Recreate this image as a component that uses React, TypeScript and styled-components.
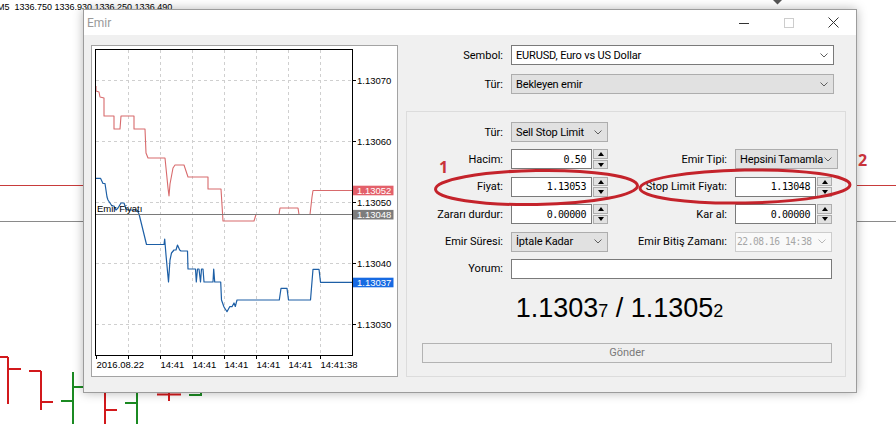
import React from 'react'
import styled, { createGlobalStyle } from 'styled-components'

const UI_FONT = 'Roboto, "Liberation Sans", Arial, sans-serif'
const CHART_FONT = '"Liberation Sans", Arial, sans-serif'
const MONO_FONT = '"DejaVu Sans Mono", "Liberation Mono", monospace'

const GRID_X = [128, 160, 192, 224, 256, 288, 320]
const PRICE_LEVELS = [
  { y: 80, label: '1.13070' },
  { y: 141, label: '1.13060' },
  { y: 202, label: '1.13050' },
  { y: 263, label: '1.13040' },
  { y: 324, label: '1.13030' },
]
const TIME_LABELS = [
  { x: 96, label: '2016.08.22' },
  { x: 160, label: '14:41' },
  { x: 192, label: '14:41' },
  { x: 224, label: '14:41' },
  { x: 256, label: '14:41' },
  { x: 288, label: '14:41' },
  { x: 320, label: '14:41:38' },
]
const PRICE_TAGS = [
  { y: 190.5, color: '#e3606a', label: '1.13052' },
  { y: 214.7, color: '#7c7c7c', label: '1.13048' },
  { y: 282.5, color: '#176ae2', label: '1.13037' },
]

const ASK_PATH =
  'M96 86 V91 L99 92 L100 97 L104 98 V116 H114 V129 H120 L121 116 H134 V129 H145 L146 153 L148 158 H165 L168 188 L169 196 L170 184 L173 168 L175 165 H184 L188 177 H208 V189 H221 L223 221 H254 L256 214.5 H279 L280 208 H298 L299 214.5 H310 L312 197 L313 190.5 H352'
const BID_PATH =
  'M96 178.3 H100.5 L103 183.5 H105 L107 197 L108 200 L110 203 L112 206 H114 L116 210 L118 208 L121 203 L124 203 L126 209 L128 210 H137 L139 214 L141 222 L146.5 244.5 H164 L164.7 239 L166 255 L168.5 282 L170 260 L171.5 253 L174 250 H176 L177.5 245 L179.7 250 L181 251 H187.5 L188 269 H195.5 L196.3 282 L197.5 269 H199 L200.5 282 L201.5 269 H203 L204 282 H213 L213.7 269 L214.7 282 H220.7 L221.5 300 L224 307 L227 311.7 L229.7 306.7 H232 L234 303 L235.3 306.5 L237 300 H279.3 L281 288.3 H287 L288.5 300 H310.5 L313 269.3 H319 L320.5 282.3 H352'

// background bars of the main chart that peek out under the dialog
const BARS = [
  { x: 8, top: 357, bottom: 404, open: 357, openFrom: 0, close: 369, closeTo: 21, color: '#d2191c' },
  { x: 41, top: 371, bottom: 410, open: 371, openFrom: 29, close: 402, closeTo: 53, color: '#d2191c' },
  { x: 73, top: 372, bottom: 424, open: 401, openFrom: 61, close: 387, closeTo: 84, color: '#1b8a22' },
  { x: 105, top: 380, bottom: 424, open: 392, openFrom: 95, close: 410, closeTo: 117, color: '#d2191c' },
  { x: 137, top: 380, bottom: 424, open: 403, openFrom: 125, close: 390, closeTo: 147, color: '#1b8a22' },
  { x: 169, top: 385, bottom: 401, open: 394.5, openFrom: 157, close: 394.5, closeTo: 181, color: '#d2191c' },
  { x: 201, top: 385, bottom: 396, open: 395, openFrom: 189, close: 390, closeTo: 203, color: '#1b8a22' },
]

const GlobalStyle = createGlobalStyle`
  html, body {
    margin: 0;
    padding: 0;
    background: #fff;
  }
  body {
    width: 896px;
    height: 424px;
    overflow: hidden;
  }
  * {
    box-sizing: border-box;
  }
`

function Chevron({ muted }: { muted?: boolean }) {
  return (
    <ChevronSvg width="8" height="5" viewBox="0 0 8 5">
      <polyline points="0.5,0.5 4,4 7.5,0.5" fill="none" stroke={muted ? '#b8b8b8' : '#5e5e5e'} strokeWidth="1" />
    </ChevronSvg>
  )
}

function ComboBox(props: { value: string, tone?: 'white' | 'gray' | 'disabled', width?: number, mono?: boolean }) {
  const { value, tone = 'gray', width, mono } = props
  return (
    <Combo $tone={tone} $width={width} $mono={mono}>
      <ComboText $mono={mono}>{value}</ComboText>
      <Chevron muted={tone === 'disabled'} />
    </Combo>
  )
}

function SpinInput({ value }: { value: string }) {
  return (
    <SpinField>
      <NumInput>{value}</NumInput>
      <Spinner>
        <SpinButton><SpinArrow $up /></SpinButton>
        <SpinButton><SpinArrow /></SpinButton>
      </Spinner>
    </SpinField>
  )
}

function OrderChart() {
  return (
    <ChartSvg width="305" height="330" viewBox="92 46 305 330">
      <g stroke="#cfcfcf" strokeDasharray="3 3" shapeRendering="crispEdges">
        {GRID_X.map(x => <line key={x} x1={x + 0.5} y1={50} x2={x + 0.5} y2={355} />)}
        {PRICE_LEVELS.map(l => <line key={l.y} x1={96} y1={l.y + 0.5} x2={352} y2={l.y + 0.5} />)}
      </g>
      <path d={ASK_PATH} fill="none" stroke="#d86a6c" strokeWidth="1.1" strokeLinejoin="round" />
      <path d={BID_PATH} fill="none" stroke="#1d5fa6" strokeWidth="1.2" strokeLinejoin="round" />
      <line x1={95} y1={214.5} x2={352} y2={214.5} stroke="#7a7a7a" shapeRendering="crispEdges" />
      <text x={97} y={212} fontFamily={CHART_FONT} fontSize="9.5" fill="#000">Emir Fiyatı</text>
      <rect x={95.5} y={49.5} width={257} height={305.5} fill="none" stroke="#000" shapeRendering="crispEdges" />
      <g stroke="#000" shapeRendering="crispEdges">
        {PRICE_LEVELS.map(l => <line key={l.y} x1={352} y1={l.y + 0.5} x2={356} y2={l.y + 0.5} />)}
        {[96, ...GRID_X].map(x => <line key={x} x1={x + 0.5} y1={355} x2={x + 0.5} y2={359} />)}
      </g>
      <g fontFamily={CHART_FONT} fontSize="9.5" fill="#000">
        {PRICE_LEVELS.map(l => <text key={l.y} x={357} y={l.y + 3.8}>{l.label}</text>)}
        {TIME_LABELS.map(t => <text key={t.x} x={t.x + 0.5} y={368}>{t.label}</text>)}
      </g>
      {PRICE_TAGS.map(t => (
        <g key={t.label}>
          <rect x={353} y={t.y - 4.8} width={40.5} height={9.6} fill={t.color} />
          <text x={357} y={t.y + 3.6} fontFamily={CHART_FONT} fontSize="9.5" fill="#fff">{t.label}</text>
        </g>
      ))}
    </ChartSvg>
  )
}

export default function App() {
  return (
    <Page>
      <GlobalStyle />
      <Backdrop width="896" height="424" viewBox="0 0 896 424">
        <line x1={0} y1={185.5} x2={896} y2={185.5} stroke="#c83b3b" />
        <line x1={0} y1={221.5} x2={896} y2={221.5} stroke="#8a8a8a" />
        <polygon points="773,0 782,0 777.5,4.5" fill="#555" />
        {BARS.map(b => (
          <g key={b.x} stroke={b.color} strokeWidth="2">
            <line x1={b.x} y1={b.top} x2={b.x} y2={b.bottom} />
            <line x1={b.openFrom} y1={b.open} x2={b.x} y2={b.open} />
            <line x1={b.x} y1={b.close} x2={b.closeTo} y2={b.close} />
          </g>
        ))}
      </Backdrop>
      <InfoLine>M5  1336.750 1336.930 1336.250 1336.490</InfoLine>

      <Dialog>
        <TitleBar>
          <Title>Emir</Title>
          <CaptionButton>
            <svg width="10" height="10" viewBox="0 0 10 10">
              <line x1="0" y1="5.5" x2="10" y2="5.5" stroke="#333" />
            </svg>
          </CaptionButton>
          <CaptionButton>
            <svg width="10" height="10" viewBox="0 0 10 10">
              <rect x="0.5" y="0.5" width="9" height="9" fill="none" stroke="#cdcdcd" />
            </svg>
          </CaptionButton>
          <CaptionButton>
            <svg width="11" height="11" viewBox="0 0 11 11">
              <path d="M0.5 0.5 L10.5 10.5 M10.5 0.5 L0.5 10.5" stroke="#333" strokeWidth="1" />
            </svg>
          </CaptionButton>
        </TitleBar>

        <Body>
          <ChartFrame>
            <OrderChart />
          </ChartFrame>

          <Side>
            <TopRow>
              <Label>Sembol:</Label>
              <ComboBox value="EURUSD, Euro vs US Dollar" tone="white" />
            </TopRow>
            <TopRow>
              <Label>Tür:</Label>
              <ComboBox value="Bekleyen emir" />
            </TopRow>

            <GroupBox>
              <FormGrid>
                <Label>Tür:</Label>
                <ComboBox value="Sell Stop Limit" />
                <span />
                <span />

                <Label>Hacim:</Label>
                <SpinInput value="0.50" />
                <Label>Emir Tipi:</Label>
                <ComboBox value="Hepsini Tamamla" width={103} />

                <Label>Fiyat:</Label>
                <SpinInput value="1.13053" />
                <Label>Stop Limit Fiyatı:</Label>
                <SpinInput value="1.13048" />

                <Label>Zararı durdur:</Label>
                <SpinInput value="0.00000" />
                <Label>Kar al:</Label>
                <SpinInput value="0.00000" />

                <Label>Emir Süresi:</Label>
                <ComboBox value="İptale Kadar" />
                <Label>Emir Bitiş Zamanı:</Label>
                <ComboBox value="22.08.16 14:38" tone="disabled" mono />

                <Label>Yorum:</Label>
                <CommentInput />
              </FormGrid>

              <Quote>
                1.1303<QuoteTail>7</QuoteTail> / 1.1305<QuoteTail>2</QuoteTail>
              </Quote>

              <SendButton disabled>Gönder</SendButton>
            </GroupBox>
          </Side>
        </Body>
      </Dialog>

      <Marks width="896" height="424" viewBox="0 0 896 424">
        <ellipse cx={536.5} cy={187.5} rx={101} ry={17} transform="rotate(-1 536.5 187.5)" fill="none" stroke="#c4232b" strokeWidth="3" />
        <ellipse cx={745} cy={186.5} rx={105} ry={16.5} transform="rotate(-1 745 186.5)" fill="none" stroke="#c4232b" strokeWidth="3" />
      </Marks>
      <MarkNumber $left={439} $top={159}>1</MarkNumber>
      <MarkNumber $left={858} $top={151.5}>2</MarkNumber>
    </Page>
  )
}

const Page = styled.div`
  position: relative;
  width: 896px;
  height: 424px;
  overflow: hidden;
  background: #fff;
`
const Backdrop = styled.svg`
  position: absolute;
  left: 0;
  top: 0;
`
const InfoLine = styled.div`
  position: relative;
  margin-left: -3px;
  padding-top: 2px;
  font-family: ${CHART_FONT};
  font-size: 9px;
  line-height: 10px;
  white-space: pre;
  color: #000;
`
const Dialog = styled.div`
  position: absolute;
  left: 83px;
  top: 9px;
  width: 774px;
  height: 384px;
  display: flex;
  flex-direction: column;
  border: 1px solid #9c9c9c;
  background: #f0f0f0;
  box-shadow: 0 0 10px rgba(0, 0, 0, 0.28);
  font-family: ${UI_FONT};
`
const TitleBar = styled.div`
  height: 25px;
  flex: none;
  display: flex;
  align-items: center;
  background: #fff;
`
const Title = styled.div`
  flex: 1;
  padding-left: 3px;
  font-size: 12px;
  color: #9a9a9a;
`
const CaptionButton = styled.div`
  width: 45px;
  height: 25px;
  display: flex;
  align-items: center;
  justify-content: center;
`
const Body = styled.div`
  flex: 1;
  min-height: 0;
  display: flex;
  gap: 8px;
  padding: 10px 10px 15px 7px;
`
const ChartFrame = styled.div`
  width: 307px;
  flex: none;
  border: 1px solid #a3a3a3;
  background: #fff;
`
const ChartSvg = styled.svg`
  display: block;
`
const Side = styled.div`
  flex: 1;
  display: flex;
  flex-direction: column;
`
const TopRow = styled.div`
  display: grid;
  grid-template-columns: 97px 1fr;
  column-gap: 8px;
  height: 20px;
  padding-right: 12px;
  & + & {
    margin-top: 9px;
  }
`
const Label = styled.div`
  display: flex;
  align-items: center;
  justify-content: flex-end;
  font-size: 11px;
  color: #000;
  white-space: nowrap;
`
const Combo = styled.div<{ $tone: 'white' | 'gray' | 'disabled', $width?: number, $mono?: boolean }>`
  display: flex;
  align-items: center;
  gap: 2px;
  height: 20px;
  width: ${({ $width }) => $width ? `${$width}px` : '100%'};
  padding: 0 5px 0 ${({ $mono }) => $mono ? 1 : 4}px;
  border: 1px solid ${({ $tone }) => $tone === 'white' ? '#7a7a7a' : $tone === 'disabled' ? '#cccccc' : '#adadad'};
  background: ${({ $tone }) => $tone === 'white' ? '#fff' : $tone === 'disabled' ? '#f9f9f9' : '#e1e1e1'};
  color: ${({ $tone }) => $tone === 'disabled' ? '#a6a6a6' : '#000'};
  font-size: 11px;
  white-space: nowrap;
`
const ComboText = styled.span<{ $mono?: boolean }>`
  flex: 1;
  min-width: 0;
  letter-spacing: -0.15px;
  ${({ $mono }) => $mono && `
    font-family: ${MONO_FONT};
    font-size: 9.6px;
    letter-spacing: -0.45px;
  `}
`
const ChevronSvg = styled.svg`
  flex: none;
  display: block;
`
const SpinField = styled.div`
  display: flex;
  gap: 1px;
  width: 97px;
`
const NumInput = styled.div`
  width: 81px;
  height: 20px;
  display: flex;
  align-items: center;
  justify-content: flex-end;
  padding-right: 5px;
  border: 1px solid #7a7a7a;
  background: #fff;
  font-family: ${MONO_FONT};
  font-size: 10px;
  letter-spacing: -0.4px;
  color: #000;
`
const Spinner = styled.div`
  width: 15px;
  display: flex;
  flex-direction: column;
  gap: 1px;
`
const SpinButton = styled.div`
  flex: 1;
  display: flex;
  align-items: center;
  justify-content: center;
  border: 1px solid #adadad;
  background: #e1e1e1;
`
const SpinArrow = styled.span<{ $up?: boolean }>`
  width: 0;
  height: 0;
  border-left: 3.5px solid transparent;
  border-right: 3.5px solid transparent;
  ${({ $up }) => $up ? 'border-bottom: 4px solid #000;' : 'border-top: 4px solid #000;'}
`
const GroupBox = styled.div`
  flex: 1;
  margin-top: 17px;
  display: flex;
  flex-direction: column;
  padding: 10px 13px 13px 0;
  border: 1px solid #dcdcdc;
`
const FormGrid = styled.div`
  display: grid;
  grid-template-columns: 96px 97px 1fr 97px;
  grid-auto-rows: 20px;
  column-gap: 8px;
  row-gap: 7.4px;
`
const CommentInput = styled.div`
  grid-column: 2 / 5;
  border: 1px solid #7a7a7a;
  background: #fff;
`
const Quote = styled.div`
  margin-top: 13.7px;
  height: 30px;
  line-height: 30px;
  text-align: center;
  font-family: ${CHART_FONT};
  font-size: 27px;
  color: #000;
  white-space: pre;
`
const QuoteTail = styled.span`
  font-size: 18px;
`
const SendButton = styled.button`
  margin: 20.3px 0 0 15px;
  height: 20px;
  padding: 0;
  display: flex;
  align-items: center;
  justify-content: center;
  border: 1px solid #b3b3b3;
  background: #efefef;
  font-family: ${UI_FONT};
  font-size: 11px;
  color: #7a7a7a;
`
const Marks = styled.svg`
  position: absolute;
  left: 0;
  top: 0;
  pointer-events: none;
`
const MarkNumber = styled.span<{ $left: number, $top: number }>`
  position: absolute;
  left: ${({ $left }) => $left}px;
  top: ${({ $top }) => $top}px;
  font-family: "Noto Sans", "Liberation Sans", sans-serif;
  font-weight: 700;
  font-size: 16px;
  line-height: 16px;
  color: #c8333a;
`
